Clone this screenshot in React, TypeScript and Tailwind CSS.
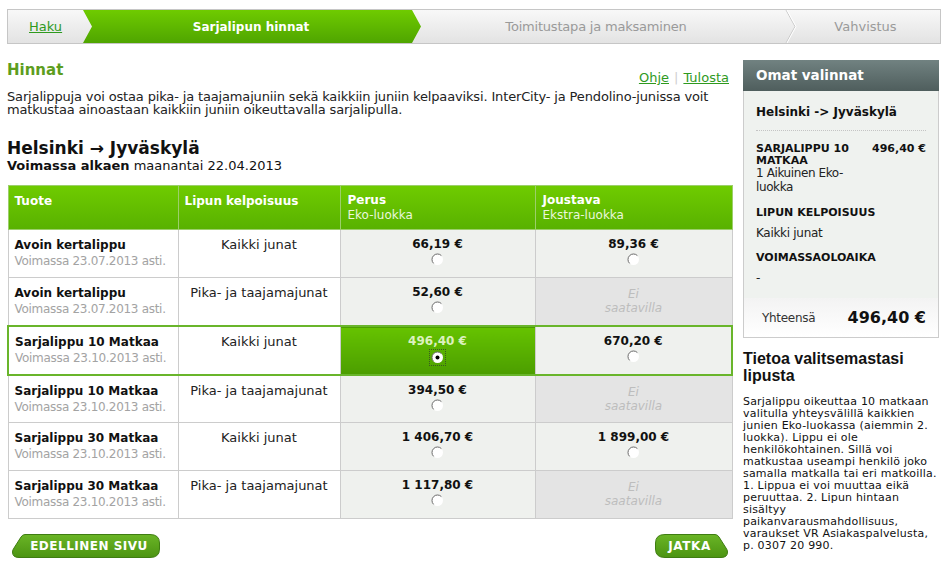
import React from 'react';

type Row = {
  name: string;
  valid: string;
  scope: string;
  perus: string;
  joustava: string | null;
  selected?: boolean;
};

const rows: Row[] = [
  { name: 'Avoin kertalippu', valid: 'Voimassa 23.07.2013 asti.', scope: 'Kaikki junat', perus: '66,19 €', joustava: '89,36 €' },
  { name: 'Avoin kertalippu', valid: 'Voimassa 23.07.2013 asti.', scope: 'Pika- ja taajamajunat', perus: '52,60 €', joustava: null },
  { name: 'Sarjalippu 10 Matkaa', valid: 'Voimassa 23.10.2013 asti.', scope: 'Kaikki junat', perus: '496,40 €', joustava: '670,20 €', selected: true },
  { name: 'Sarjalippu 10 Matkaa', valid: 'Voimassa 23.10.2013 asti.', scope: 'Pika- ja taajamajunat', perus: '394,50 €', joustava: null },
  { name: 'Sarjalippu 30 Matkaa', valid: 'Voimassa 23.10.2013 asti.', scope: 'Kaikki junat', perus: '1 406,70 €', joustava: '1 899,00 €' },
  { name: 'Sarjalippu 30 Matkaa', valid: 'Voimassa 23.10.2013 asti.', scope: 'Pika- ja taajamajunat', perus: '1 117,80 €', joustava: null },
];

const Radio = ({ checked = false }: { checked?: boolean }) => {
  if (checked) {
    return (
      <span className="inline-flex items-center justify-center w-[17px] h-[17px] border border-dotted border-[#3a5a20]">
        <svg width="13" height="13" viewBox="0 0 13 13">
          <circle cx="6.5" cy="6.5" r="5.5" fill="#ffffff" />
          <path d="M2.6,10.4 A5.5,5.5 0 0 1 10.4,2.6" fill="none" stroke="#6a6a6a" strokeWidth="1" />
          <circle cx="6.5" cy="6.5" r="2" fill="#000000" />
        </svg>
      </span>
    );
  }
  return (
    <svg width="13" height="13" viewBox="0 0 13 13" className="inline-block">
      <circle cx="6.5" cy="6.5" r="5.5" fill="#ffffff" />
      <path d="M2.6,10.4 A5.5,5.5 0 0 1 10.4,2.6" fill="none" stroke="#6a6a6a" strokeWidth="1" />
    </svg>
  );
};

const Breadcrumb = () => (
  <div className="mx-[7px] mt-[9px] h-[35px] border border-[#c6c6c6] bg-gradient-to-b from-[#f8f8f8] to-[#e3e3e3] flex text-[13px]">
    <div className="w-[75px] flex items-center pl-[21px]">
      <a href="#" className="text-[#2f9a1e] underline">Haku</a>
    </div>
    <div className="w-[338px] flex items-center justify-center pr-[2px] bg-gradient-to-b from-[#6fcb00] to-[#4fa500] text-white font-bold text-[12px] [clip-path:polygon(0_0,calc(100%-9px)_0,100%_50%,calc(100%-9px)_100%,0_100%,9px_50%)]">
      Sarjalipun hinnat
    </div>
    <div className="w-[364px] flex items-center justify-center pr-[14px] text-[#9a9a9a] tracking-[-0.2px]">
      Toimitustapa ja maksaminen
    </div>
    <svg width="12" height="33" viewBox="0 0 12 33">
      <polyline points="1,0 10,16.5 1,33" fill="none" stroke="#c9c9c9" strokeWidth="1" />
      <polyline points="2,0 11,16.5 2,33" fill="none" stroke="#ffffff" strokeWidth="1" />
    </svg>
    <div className="flex-1 flex items-center justify-center pr-[6px] text-[#9a9a9a]">Vahvistus</div>
  </div>
);

const BackButton = () => (
  <button className="relative w-[148px] h-[24px] ml-[5px] text-white font-bold text-[12px] tracking-[0.5px]">
    <svg className="absolute inset-0" width="148" height="24" viewBox="0 0 148 24">
      <defs>
        <linearGradient id="gb" x1="0" y1="0" x2="0" y2="1">
          <stop offset="0" stopColor="#6ab526" />
          <stop offset="1" stopColor="#4c9412" />
        </linearGradient>
      </defs>
      <path d="M13,0.5 H138 Q147.5,0.5 147.5,9 V15 Q147.5,23.5 138,23.5 H7 Q0.5,23.5 0.5,18 Q0.5,16 2,14 L9,3 Q10.5,0.5 13,0.5 Z" fill="url(#gb)" stroke="#3f7d12" />
    </svg>
    <span className="relative pl-[6px]">EDELLINEN SIVU</span>
  </button>
);

const NextButton = () => (
  <button className="relative w-[73px] h-[24px] mr-[3px] text-white font-bold text-[12px] tracking-[0.6px]">
    <svg className="absolute inset-0" width="73" height="24" viewBox="0 0 73 24">
      <defs>
        <linearGradient id="gn" x1="0" y1="0" x2="0" y2="1">
          <stop offset="0" stopColor="#6ab526" />
          <stop offset="1" stopColor="#4c9412" />
        </linearGradient>
      </defs>
      <path d="M60,0.5 H10 Q0.5,0.5 0.5,9 V15 Q0.5,23.5 10,23.5 H66 Q72.5,23.5 72.5,18 Q72.5,16 71,14 L64,3 Q62.5,0.5 60,0.5 Z" fill="url(#gn)" stroke="#3f7d12" />
    </svg>
    <span className="relative pr-[4px]">JATKA</span>
  </button>
);

const PriceTable = () => (
  <table className="w-[724px] border-collapse table-fixed mt-[12px]">
    <colgroup>
      <col className="w-[170px]" />
      <col className="w-[162px]" />
      <col className="w-[195px]" />
      <col className="w-[197px]" />
    </colgroup>
    <thead>
      <tr className="h-[44px] bg-gradient-to-b from-[#6fcb00] to-[#58b100] text-white text-left align-top">
        <th className="border border-[#9ccf6a] pl-[6px] pt-[7px] font-bold text-[12px] leading-[16px]">Tuote</th>
        <th className="border border-[#9ccf6a] pl-[6px] pt-[7px] font-bold text-[12px] leading-[16px]">Lipun kelpoisuus</th>
        <th className="border border-[#9ccf6a] pl-[7px] pt-[7px] leading-[15px]">
          <div className="font-bold text-[12px]">Perus</div>
          <div className="font-normal text-[12px] leading-[14px] text-[#eaf7dc]">Eko-luokka</div>
        </th>
        <th className="border border-[#9ccf6a] pl-[7px] pt-[7px] leading-[15px]">
          <div className="font-bold text-[12px]">Joustava</div>
          <div className="font-normal text-[12px] leading-[14px] text-[#eaf7dc]">Ekstra-luokka</div>
        </th>
      </tr>
    </thead>
    <tbody>
      {rows.map((row, i) => {
        const edge = row.selected ? 'border-y-2 border-y-[#69b52b]' : '';
        return (
          <tr key={i} className={row.selected ? 'h-[49px]' : 'h-[48px]'}>
            <td className={`border border-[#cccccc] bg-white align-top pl-[6px] pt-[7px] ${edge} ${row.selected ? 'border-l-2 border-l-[#69b52b]' : ''}`}>
              <div className="font-bold text-[12px] leading-[16px] text-[#111]">{row.name}</div>
              <div className="text-[12px] leading-[16px] tracking-[-0.3px] text-[#a3a3a3]">{row.valid}</div>
            </td>
            <td className={`border border-[#cccccc] bg-white align-top text-center pt-[7px] leading-[16px] ${edge}`}>
              {row.scope}
            </td>
            <td
              className={`border border-[#cccccc] align-top text-center pt-[6px] ${edge} ${
                row.selected ? 'bg-gradient-to-b from-[#66c300] to-[#4c9e00]' : 'bg-[#eff1ee]'
              }`}
            >
              <div className={`font-bold text-[12px] leading-[16px] whitespace-nowrap ${row.selected ? 'text-[#dcf1bf]' : 'text-[#111]'}`}>
                {row.perus}
              </div>
              <div className={`flex justify-center ${row.selected ? '' : 'mt-[1px]'}`}>
                <Radio checked={row.selected} />
              </div>
            </td>
            {row.joustava ? (
              <td className={`border border-[#cccccc] bg-[#eff1ee] align-top text-center pt-[6px] ${edge} ${row.selected ? 'border-r-2 border-r-[#69b52b]' : ''}`}>
                <div className="font-bold text-[12px] leading-[16px] whitespace-nowrap text-[#111]">{row.joustava}</div>
                <div className="flex justify-center mt-[1px]">
                  <Radio />
                </div>
              </td>
            ) : (
              <td className={`border border-[#cccccc] bg-[#e4e4e4] align-top text-center pt-[9px] italic text-[12px] leading-[14px] text-[#bdbdbd] ${edge}`}>
                Ei
                <br />
                saatavilla
              </td>
            )}
          </tr>
        );
      })}
    </tbody>
  </table>
);

const Sidebar = () => (
  <aside className="w-[196px] shrink-0">
    <div className="h-[31px] bg-gradient-to-b from-[#718281] to-[#4f5e5d] text-white font-bold text-[13.5px] flex items-center pl-[13px]">
      Omat valinnat
    </div>
    <div className="border-x border-[#cccccc] bg-[#eff2ef] px-[12px] pb-[13px]">
      <div className="pt-[13px] pb-[10px] border-b border-dotted border-[#c4c4c4] font-bold text-[12px] leading-[16px] text-[#111]">
        Helsinki -&gt; Jyväskylä
      </div>
      <div className="flex justify-between mt-[12px] text-[11px] font-bold leading-[12px] text-[#111]">
        <div className="w-[110px]">SARJALIPPU 10 MATKAA</div>
        <div className="whitespace-nowrap">496,40 €</div>
      </div>
      <div className="w-[104px] text-[12px] leading-[14px] tracking-[-0.4px] text-[#222] -mt-[1px]">1 Aikuinen Eko-luokka</div>
      <div className="mt-[13px] text-[11px] font-bold leading-[12px] text-[#111]">LIPUN KELPOISUUS</div>
      <div className="mt-[7px] text-[12px] leading-[14px] tracking-[-0.3px] text-[#222]">Kaikki junat</div>
      <div className="mt-[12px] text-[11px] font-bold leading-[12px] text-[#111]">VOIMASSAOLOAIKA</div>
      <div className="mt-[7px] text-[12px] leading-[14px] text-[#222]">-</div>
    </div>
    <div className="h-[40px] border border-t-0 border-[#cccccc] bg-gradient-to-b from-[#f3f3f3] to-[#ffffff] flex items-center justify-between pl-[18px] pr-[12px]">
      <span className="text-[12px] tracking-[-0.3px] text-[#333]">Yhteensä</span>
      <span className="text-[16px] font-bold text-[#111]">496,40 €</span>
    </div>

    <h3 className="mt-[12px] font-['Liberation_Sans',Arial,sans-serif] font-bold text-[16px] leading-[17px] text-[#111]">
      Tietoa valitsemastasi lipusta
    </h3>
    <p className="mt-[12px] text-[11px] leading-[12px] tracking-[0.2px] text-[#111]">
      Sarjalippu oikeuttaa 10 matkaan valitulla yhteysvälillä kaikkien junien Eko-luokassa (aiemmin 2. luokka). Lippu ei ole
      henkilökohtainen. Sillä voi matkustaa useampi henkilö joko samalla matkalla tai eri matkoilla. 1. Lippua ei voi muuttaa
      eikä peruuttaa. 2. Lipun hintaan sisältyy paikanvarausmahdollisuus, varaukset VR Asiakaspalvelusta, p. 0307 20 990.
    </p>
  </aside>
);

export default function App() {
  return (
    <div className="w-[948px] h-[573px] overflow-hidden bg-white font-['DejaVu_Sans',Verdana,sans-serif] text-[13px] text-[#222]">
      <Breadcrumb />
      <div className="flex gap-[12px] px-[7px] mt-[16px]">
        <main className="w-[724px] shrink-0">
          <div className="h-[24px] flex justify-between">
            <h1 className="text-[15px] font-bold leading-[20px] text-[#5d9d1d]">Hinnat</h1>
            <div className="mt-[10px] leading-[16px] pr-[2px]">
              <a href="#" className="text-[#2f9a1e] underline">Ohje</a>
              <span className="text-[#cfcfcf] mx-[5px]">|</span>
              <a href="#" className="text-[#2f9a1e] underline">Tulosta</a>
            </div>
          </div>
          <p className="mt-[6px] leading-[13px] tracking-[-0.15px] text-[#222]">
            Sarjalippuja voi ostaa pika- ja taajamajuniin sekä kaikkiin juniin kelpaaviksi. InterCity- ja Pendolino-junissa voit
            matkustaa ainoastaan kaikkiin juniin oikeuttavalla sarjalipulla.
          </p>
          <h2 className="mt-[22px] text-[17px] font-bold leading-[20px] text-[#111]">Helsinki → Jyväskylä</h2>
          <div className="leading-[15px] text-[#111]">
            <span className="font-bold">Voimassa alkaen</span> maanantai 22.04.2013
          </div>
          <PriceTable />
          <div className="mt-[15px] flex justify-between">
            <BackButton />
            <NextButton />
          </div>
        </main>
        <Sidebar />
      </div>
    </div>
  );
}
